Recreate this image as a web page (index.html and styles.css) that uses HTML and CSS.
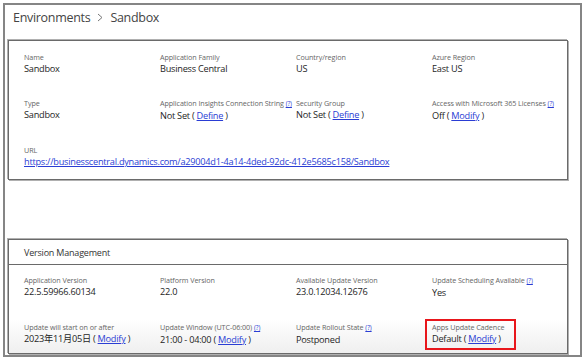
FILE: index.html
```html
<!DOCTYPE html>
<html>
<head>
<meta charset="utf-8">
<link rel="stylesheet" href="styles.css">
</head>
<body>
<div class="frame">
  <div class="title">
    <span>Environments</span>
    <svg class="chev" width="6" height="9" viewBox="0 0 6 9"><path d="M1 1 L5 4.5 L1 8" fill="none" stroke="#777" stroke-width="1"/></svg>
    <span>Sandbox</span>
  </div>
  <div class="card card-top">
    <div class="grid">
      <div class="cell"><div class="label">Name</div><div class="value">Sandbox</div></div>
      <div class="cell"><div class="label">Application Family</div><div class="value">Business Central</div></div>
      <div class="cell"><div class="label">Country/region</div><div class="value">US</div></div>
      <div class="cell"><div class="label">Azure Region</div><div class="value">East US</div></div>

      <div class="cell"><div class="label">Type</div><div class="value">Sandbox</div></div>
      <div class="cell"><div class="label">Application Insights Connection String <a class="help">(?)</a></div><div class="value">Not Set ( <a class="link">Define</a> )</div></div>
      <div class="cell"><div class="label">Security Group</div><div class="value">Not Set ( <a class="link">Define</a> )</div></div>
      <div class="cell"><div class="label">Access with Microsoft 365 Licenses <a class="help">(?)</a></div><div class="value">Off ( <a class="link">Modify</a> )</div></div>

      <div class="cell wide"><div class="label">URL</div><div class="value"><a class="link">https://businesscentral.dynamics.com/a29004d1-4a14-4ded-92dc-412e5685c158/Sandbox</a></div></div>
    </div>
  </div>
  <div class="card card-version">
    <div class="card-header">Version Management</div>
    <div class="grid grid-version">
      <div class="cell"><div class="label">Application Version</div><div class="value">22.5.59966.60134</div></div>
      <div class="cell"><div class="label">Platform Version</div><div class="value">22.0</div></div>
      <div class="cell"><div class="label">Available Update Version</div><div class="value">23.0.12034.12676</div></div>
      <div class="cell"><div class="label">Update Scheduling Available <a class="help">(?)</a></div><div class="value">Yes</div></div>

      <div class="cell"><div class="label">Update will start on or after</div><div class="value">2023年11月05日 ( <a class="link">Modify</a> )</div></div>
      <div class="cell"><div class="label">Update Window (UTC-06:00) <a class="help">(?)</a></div><div class="value">21:00 - 04:00 ( <a class="link">Modify</a> )</div></div>
      <div class="cell"><div class="label">Update Rollout State <a class="help">(?)</a></div><div class="value">Postponed</div></div>
      <div class="cell highlight"><div class="label">Apps Update Cadence</div><div class="value">Default ( <a class="link">Modify</a> )</div></div>
    </div>
  </div>
</div>
</body>
</html>
```
FILE: styles.css
```css
html, body {
  margin: 0;
  padding: 0;
  background: #ffffff;
}
body {
  font-family: "Open Sans", "Noto Sans CJK JP", sans-serif;
  color: #222;
  width: 586px;
  height: 359px;
  overflow: hidden;
}
.frame {
  margin: 3px 0 0 3px;
  width: 575px;
  height: 350px;
  border: 2px solid #858585;
  box-sizing: content-box;
}
.title {
  display: flex;
  align-items: center;
  gap: 6px;
  height: 25px;
  padding: 0 0 0 8px;
  box-sizing: border-box;
  font-size: 12.5px;
  letter-spacing: -0.3px;
  color: #444;
  font-weight: 400;
}
.chev { margin: 0 1px; }
.card {
  margin-left: 3px;
  width: 560px;
  box-sizing: border-box;
  border: 1px solid #6a6a6a;
  box-shadow: 1px 1px 0 #b0b0b0, -1px -1px 0 #b0b0b0;
  background: #fff;
}
.card-top {
  margin-top: 10px;
  height: 140px;
  padding: 11px 0 0 15px;
}
.card-version {
  margin-top: 59px;
  height: 115px;
  background: linear-gradient(#fff 70%, #efefef 100%);
}
.card-header {
  height: 25px;
  display: flex;
  align-items: center;
  padding-left: 15px;
  font-size: 9px;
  letter-spacing: -0.2px;
  color: #333;
  border-bottom: 1px solid #6a6a6a;
  box-sizing: border-box;
}
.grid {
  display: grid;
  grid-template-columns: 136px 136px 136px 136px;
  row-gap: 22px;
}
.grid-version {
  padding: 10px 0 0 15px;
}
.cell { position: relative; }
.wide { grid-column: 1 / span 4; }
.label {
  font-size: 7.2px;
  letter-spacing: -0.08px;
  line-height: 10px;
  color: #666;
  white-space: nowrap;
}
.value {
  font-size: 9.2px;
  letter-spacing: -0.25px;
  line-height: 14px;
  color: #1e1e1e;
  white-space: nowrap;
}
.link {
  color: #2a3dd4;
  text-decoration: underline;
}
.help {
  font-size: 6.4px;
  color: #2a3dd4;
  text-decoration: underline;
}
.highlight::after {
  content: "";
  position: absolute;
  left: -7px;
  top: -3px;
  width: 91px;
  height: 31px;
  border: 2px solid #e8161b;
  box-sizing: border-box;
}
```
